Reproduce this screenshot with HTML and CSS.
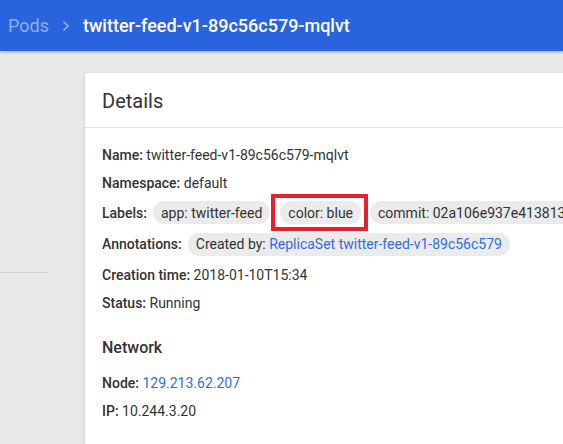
FILE: index.html
```html
<!DOCTYPE html>
<html>
<head>
<meta charset="utf-8">
<link rel="stylesheet" href="styles.css">
</head>
<body>
<header class="topbar">
  <span class="crumb">Pods</span>
  <svg class="chev" width="10" height="14" viewBox="0 0 10 14"><path d="M1.5 2.5 L6 7 L1.5 11.5" fill="none" stroke="#8fb0ef" stroke-width="1.6"/></svg>
  <span class="title">twitter-feed-v1-89c56c579-mqlvt</span>
</header>
<div class="main">
  <aside class="side"><div class="side-line"></div></aside>
  <section class="card">
    <div class="card-head">Details</div>
    <div class="card-body">
      <div class="row r28"><b>Name:</b>&nbsp;twitter-feed-v1-89c56c579-mqlvt</div>
      <div class="row r28"><b>Namespace:</b>&nbsp;default</div>
      <div class="row r31"><b>Labels:</b>
        <span class="chips">
          <span class="chip first">app: twitter-feed</span>
          <span class="mark"><span class="chip">color: blue</span></span>
          <span class="chip">commit: 02a106e937e41381310a3c41d4f5236f7ec2cd4a</span>
        </span>
      </div>
      <div class="row r32"><b>Annotations:</b>
        <span class="chips"><span class="chip">Created by:&nbsp;<a class="link">ReplicaSet twitter-feed-v1-89c56c579</a></span></span>
      </div>
      <div class="row r29"><b>Creation time:</b>&nbsp;2018-01-10T15:34</div>
      <div class="row r28"><b>Status:</b>&nbsp;Running</div>
      <h2 class="sub">Network</h2>
      <div class="row r28"><b>Node:</b>&nbsp;<a class="link">129.213.62.207</a></div>
      <div class="row r28"><b>IP:</b>&nbsp;10.244.3.20</div>
    </div>
  </section>
</div>
</body>
</html>
```
FILE: styles.css
```css
* { box-sizing: border-box; }
html, body { margin: 0; padding: 0; }
body {
  background: #e9e9e9;
  font-family: Roboto, "Liberation Sans", sans-serif;
  color: #333;
  width: 563px;
  height: 444px;
  overflow: hidden;
}
.topbar {
  height: 51px;
  background: #2a63de;
  display: flex;
  align-items: center;
  padding-left: 8px;
  font-size: 18px;
  box-shadow: 0 1px 3px rgba(0,0,0,0.3);
  position: relative;
  z-index: 2;
}
.crumb { color: #8fb0ef; }
.chev { margin: 0 11px 0 13px; }
.title { color: #fff; font-weight: 500; white-space: nowrap; }
.main {
  display: flex;
  padding-top: 22px;
}
.side {
  width: 85px;
  flex: none;
  padding-top: 199px;
}
.side-line { width: 49px; height: 1px; background: #cfcfcf; }
.card {
  background: #fff;
  width: 560px;
  flex: none;
  height: 420px;
  box-shadow: 0 1px 3px rgba(0,0,0,0.22);
  border-radius: 2px 0 0 0;
}
.card-head {
  height: 55px;
  padding-left: 17px;
  display: flex;
  align-items: center;
  font-size: 20px;
  border-bottom: 1px solid #dedede;
  padding-top: 1px;
}
.card-body {
  padding: 13px 0 0 17px;
  font-size: 14px;
}
.row {
  display: flex;
  align-items: center;
  white-space: nowrap;
}
.row b { font-weight: 500; }
.r28 { height: 28px; }
.r29 { height: 29px; }
.r31 { height: 31px; }
.r32 { height: 32px; }
.chips { display: flex; align-items: center; margin-left: 6px; }
.chip {
  display: inline-flex;
  align-items: center;
  height: 23px;
  padding: 0 8px;
  background: #ebebeb;
  border-radius: 12px;
}
.chip.first { margin-right: 1px; }
.mark {
  display: inline-flex;
  border: 4px solid #e8202e;
  padding: 3px 3px 3px 5px;
  margin-right: 2px;
}
.link { color: #326de6; text-decoration: none; }
.sub {
  margin: 0;
  height: 52px;
  display: flex;
  align-items: center;
  font-size: 16px;
  font-weight: 500;
  padding-top: 8px;
}
```
